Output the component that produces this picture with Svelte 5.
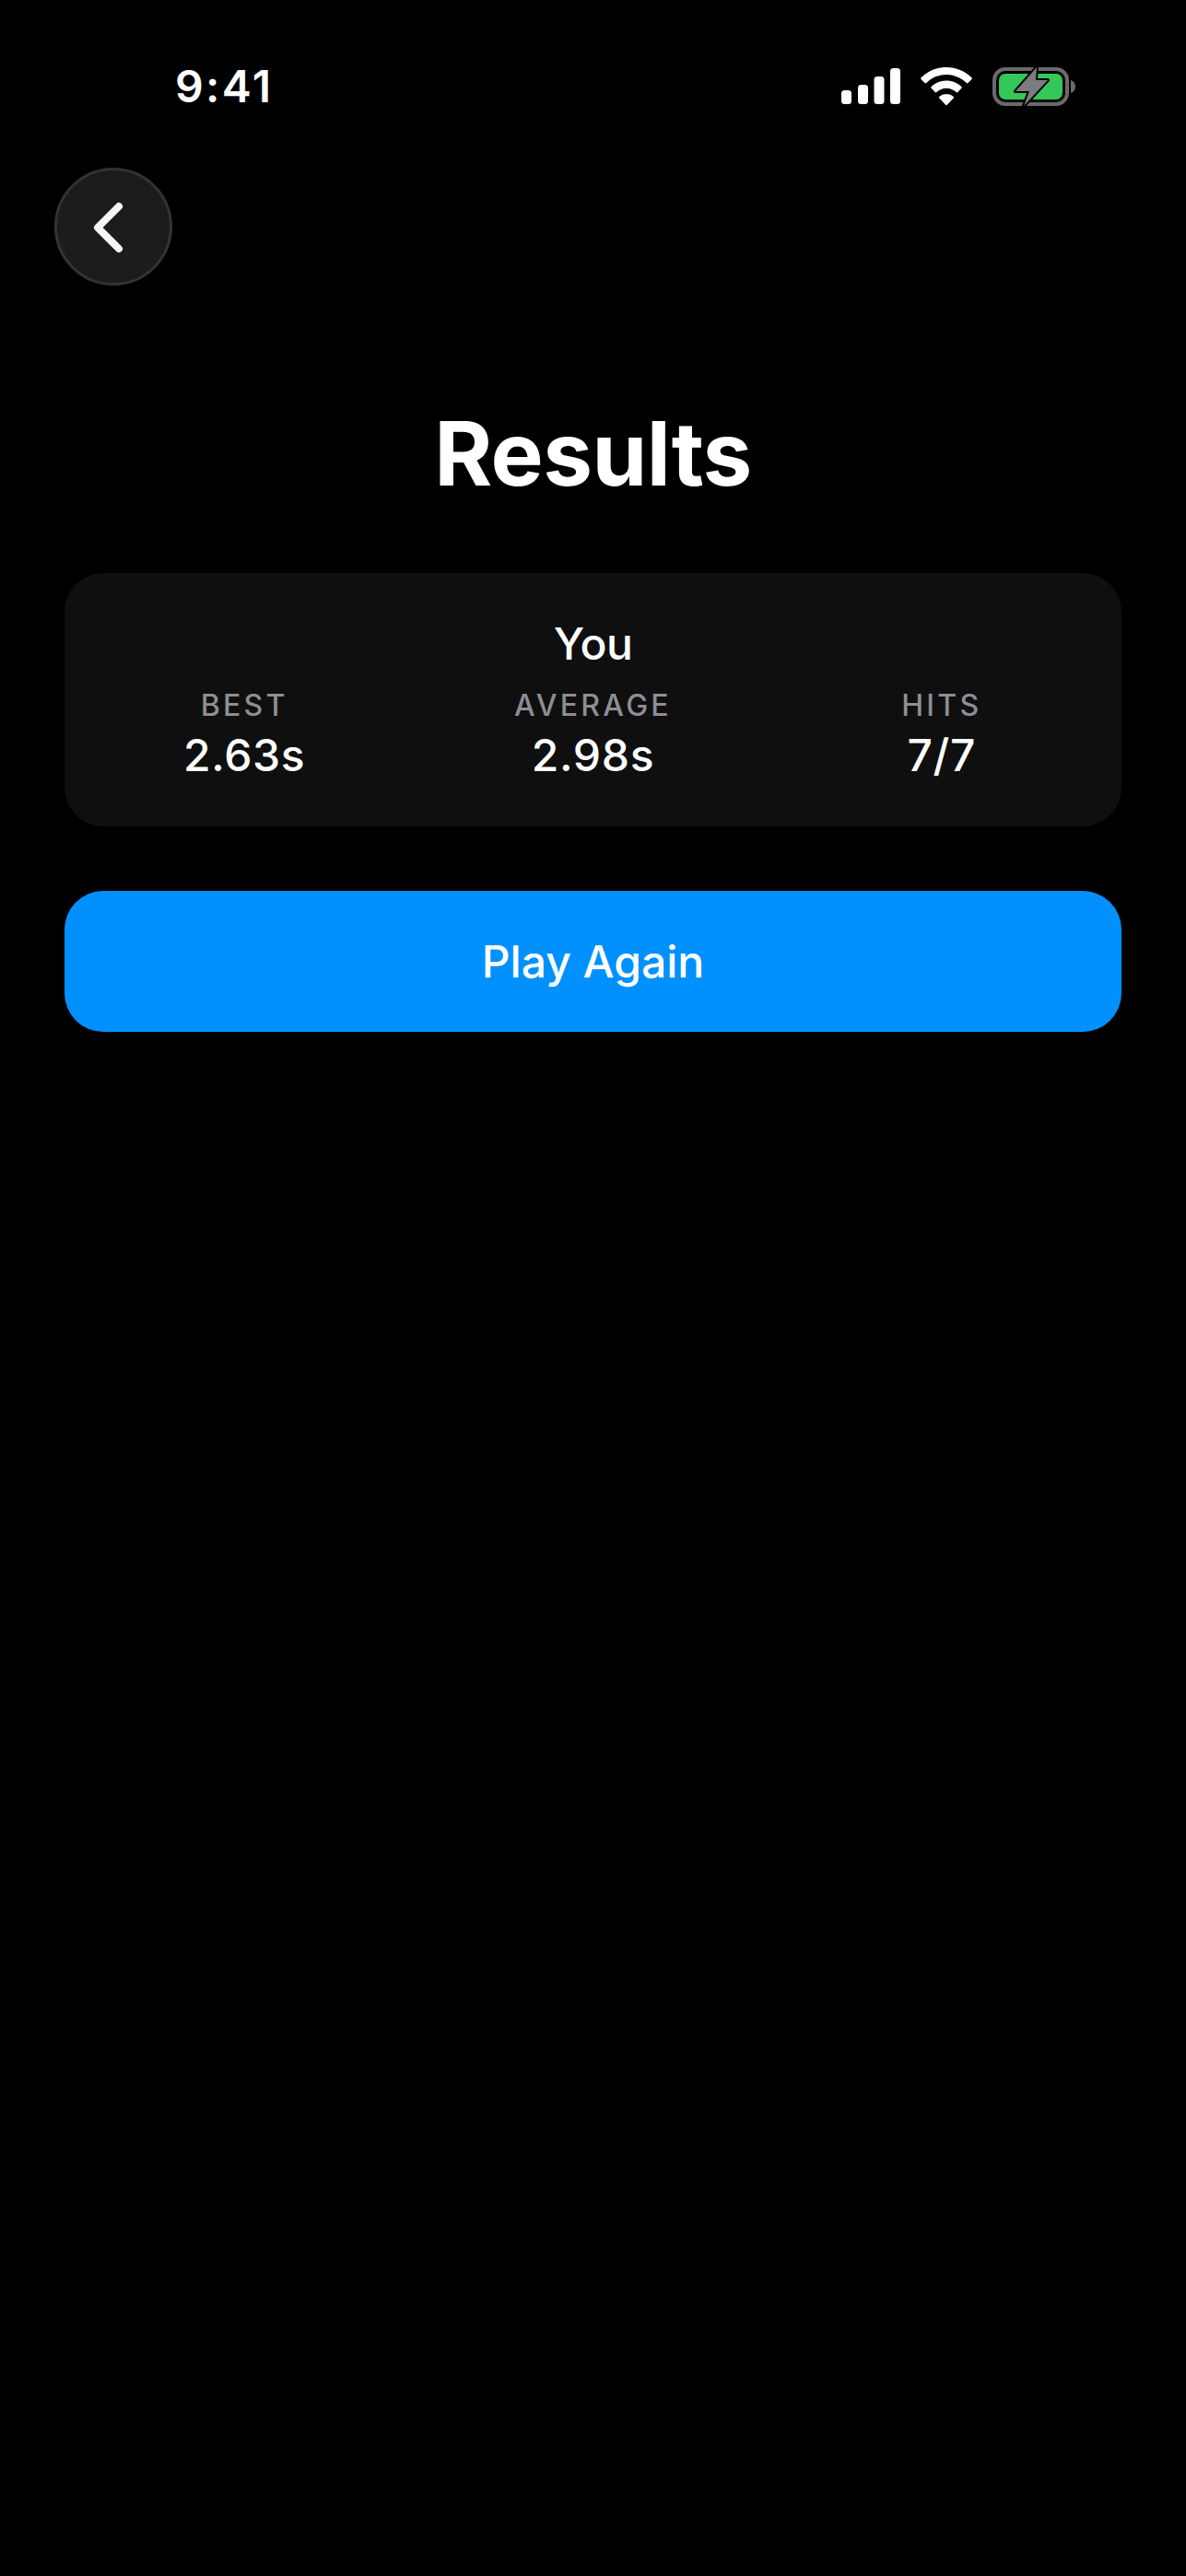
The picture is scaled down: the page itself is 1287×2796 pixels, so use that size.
<script>
  const stats = [
    { label: 'BEST', value: '2.63s' },
    { label: 'AVERAGE', value: '2.98s' },
    { label: 'HITS', value: '7/7' }
  ];
</script>

<div class="screen">
  <header class="status">
    <span class="time">9:41</span>
    <div class="icons">
      <svg class="signal" width="64" height="40" viewBox="0 0 64 40" aria-hidden="true">
        <rect x="0" y="24" width="11" height="15" rx="3.5" />
        <rect x="18" y="18" width="11" height="21" rx="3.5" />
        <rect x="35.500" y="9" width="11" height="30" rx="3.5" />
        <rect x="53" y="0" width="11" height="39" rx="3.5" />
      </svg>
      <svg class="wifi" width="56" height="42" viewBox="0 0 56 42" aria-hidden="true">
        <path d="M28 0C17.500 0 8 4 0.500 11.200c-.5.500-.5 1.200 0 1.700l4 4.200c.5.500 1.200.5 1.700 0C12 11.400 19.700 8 28 8s16 3.400 21.800 9.100c.5.500 1.200.5 1.700 0l4-4.200c.5-.5.500-1.200 0-1.700C48 4 38.500 0 28 0z" />
        <path d="M28 14.500c-6.300 0-12 2.400-16.300 6.600-.5.500-.5 1.200 0 1.700l4 4.200c.5.500 1.200.5 1.700 0 2.800-2.600 6.500-4.200 10.600-4.200s7.800 1.600 10.600 4.200c.5.500 1.200.5 1.700 0l4-4.200c.5-.5.400-1.200 0-1.700C40 16.900 34.300 14.500 28 14.500z" />
        <path d="M28 29c-3 0-5.600 1.100-7.700 3-.4.400-.5 1.100 0 1.600l6.800 7.200c.5.500 1.300.5 1.800 0l6.800-7.200c.5-.5.400-1.200 0-1.600-2.100-1.900-4.700-3-7.700-3z" />
      </svg>
      <svg class="battery" width="91" height="42" viewBox="0 0 91 42" aria-hidden="true">
        <rect x="2" y="2" width="79" height="38" rx="12" fill="none" stroke="#6a6a6c" stroke-width="4" />
        <rect x="7" y="7" width="69" height="28" rx="7" fill="#34c759" />
        <path d="M85 14c3 .8 5 3.700 5 7s-2 6.200-5 7z" fill="#6a6a6c" />
        <path d="M48 0L25 26H40L34 42L60 14H47Z" fill="#7c7c7e" stroke="#000" stroke-width="4" stroke-linejoin="round" paint-order="stroke" />
      </svg>
    </div>
  </header>

  <button class="back" aria-label="Back">
    <svg width="48" height="64" viewBox="0 0 48 64" aria-hidden="true">
      <path d="M30 10L7 33l23 23" fill="none" stroke="#f5f5f5" stroke-width="8" stroke-linecap="round" stroke-linejoin="round" />
    </svg>
  </button>

  <h1>Results</h1>

  <section class="card">
    <div class="name">You</div>
    <div class="stats">
      {#each stats as s}
        <div class="stat">
          <div class="label">{s.label}</div>
          <div class="value">{s.value}</div>
        </div>
      {/each}
    </div>
  </section>

  <button class="play">Play Again</button>
</div>

<style>
  :global(body) {
    margin: 0;
    background: #000;
  }
  .screen {
    width: 1287px;
    height: 2796px;
    background: #000;
    color: #fff;
    font-family: Inter, "Noto Sans", sans-serif;
    overflow: hidden;
    display: flex;
    flex-direction: column;
    box-sizing: border-box;
  }
  .status {
    display: flex;
    justify-content: space-between;
    align-items: center;
    height: 58px;
    margin-top: 65px;
    padding: 0 119px 0 190px;
    box-sizing: content-box;
  }
  .time {
    font-size: 48px;
    font-weight: 600;
    line-height: 58px;
    letter-spacing: 2.4px;
  }
  .icons {
    display: flex;
    align-items: center;
    gap: 22px;
  }
  .icons svg {
    display: block;
    fill: #fff;
  }
  .back {
    width: 128px;
    height: 128px;
    margin: 59px 0 0 59px;
    padding: 0;
    box-sizing: border-box;
    border-radius: 50%;
    border: 3px solid #333335;
    background: #1c1c1e;
    display: flex;
    align-items: center;
    justify-content: center;
  }
  h1 {
    margin: 124px 0 0;
    font-size: 96px;
    font-weight: 700;
    line-height: 116px;
    letter-spacing: -0.5px;
    text-align: center;
  }
  .card {
    margin: 72px 70px 0;
    height: 275px;
    box-sizing: border-box;
    padding: 42px 48px 0;
    background: #0f0f10;
    border-radius: 42px;
    text-align: center;
  }
  .name {
    font-size: 48px;
    font-weight: 550;
    line-height: 70px;
    letter-spacing: -0.5px;
  }
  .stats {
    display: grid;
    grid-template-columns: repeat(3, 1fr);
    column-gap: 84px;
    margin-top: 12px;
  }
  .label {
    font-size: 32px;
    font-weight: 550;
    line-height: 39px;
    letter-spacing: 3.3px;
    color: #8e8e93;
  }
  .value {
    font-size: 48px;
    font-weight: 550;
    line-height: 58px;
    letter-spacing: 0.7px;
    margin-top: 6px;
  }
  .play {
    margin: 70px 70px 0;
    height: 153px;
    border: 0;
    border-radius: 42px;
    background: #0091ff;
    color: #fff;
    font-family: inherit;
    font-size: 48px;
    font-weight: 550;
    padding: 0;
  }
</style>
